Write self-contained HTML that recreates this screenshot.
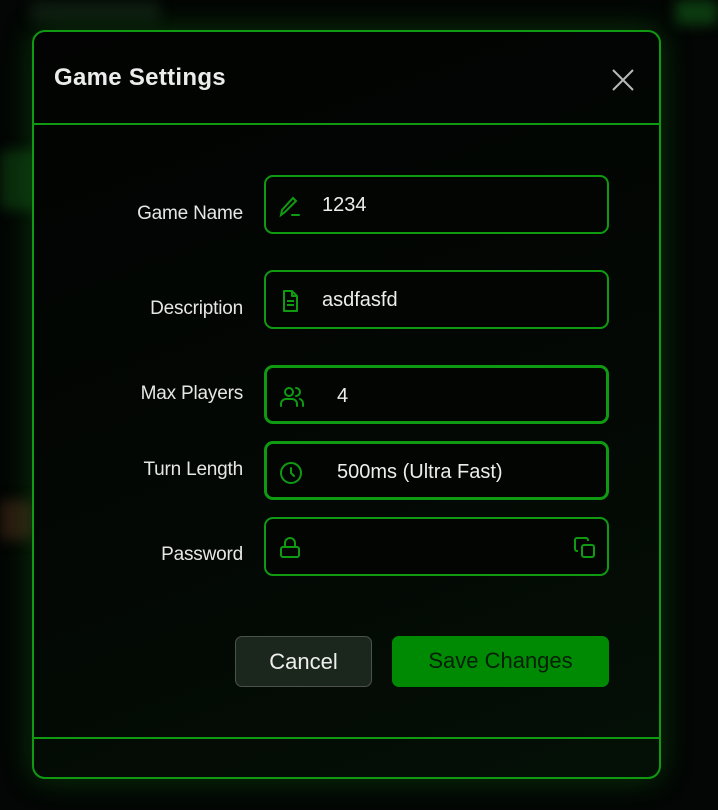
<!DOCTYPE html>
<html><head><style>
*{box-sizing:border-box;margin:0;padding:0}
body{width:718px;height:810px;background:#030604;font-family:"Liberation Sans",sans-serif;position:relative;overflow:hidden}
.bgblur{position:absolute;border-radius:6px;filter:blur(6px)}
.modal{position:absolute;left:32px;top:30px;width:629px;height:749px;border:2px solid #0f9a12;border-radius:13px;background:linear-gradient(160deg,#020302 0%,#030804 60%,#041006 100%);box-shadow:0 0 30px rgba(20,140,20,.35)}
.hdr{position:absolute;left:0;right:0;top:0;height:93px;border-bottom:2px solid #0f9a12}
.hdr h2{position:absolute;left:20px;top:32px;font-size:24px;font-weight:bold;color:#ececec;letter-spacing:0.3px}
.close{position:absolute;left:577px;top:36px}
.ftr{position:absolute;left:0;right:0;top:705px;border-top:2px solid #0f9a12}
.lbl{position:absolute;right:416px;font-size:19px;color:#e6e6e6;text-align:right;white-space:nowrap;letter-spacing:-0.2px}
.inp{position:absolute;left:230px;width:345px;height:59px;border:2px solid #0f9a12;border-radius:9px;background:#020502}
.inp.thick{border-width:3px}
.inp svg{position:absolute;left:12px;top:17px}
.inp span{position:absolute;top:17px;font-size:20px;color:#ededed}
.btn{position:absolute;top:604px;height:51px;border-radius:7px;font-size:22px;text-align:center;line-height:49px}
</style></head><body>
<div class="bgblur" style="left:30px;top:0;width:130px;height:22px;background:#0e1a10"></div>
<div class="bgblur" style="left:675px;top:0;width:43px;height:25px;background:#0c3a10"></div>
<div class="bgblur" style="left:0;top:150px;width:40px;height:60px;background:#0a2a0c"></div>
<div class="bgblur" style="left:0;top:500px;width:35px;height:40px;background:#2a1a10"></div>
<div class="modal">
 <div class="hdr"><h2>Game Settings</h2>
  <svg class="close" width="24" height="24" viewBox="0 0 24 24"><path d="M2 2L22 22M22 2L2 22" stroke="#b8b8b8" stroke-width="2"/></svg></div>
 <div class="lbl" style="top:171px">Game Name</div>
 <div class="inp" style="top:143px"><svg width="24" height="24" viewBox="0 0 24 24" fill="none" stroke="#0f9a12" stroke-width="2" stroke-linecap="round"><path d="M3 21l1-5L15 4l3 3L7 18zM14 21h7"/></svg><span style="left:56px">1234</span></div>
 <div class="lbl" style="top:266px">Description</div>
 <div class="inp" style="top:238px"><svg width="24" height="24" viewBox="0 0 24 24" fill="none" stroke="#0f9a12" stroke-width="2" stroke-linejoin="round"><path d="M6 2h8l5 5v15H6zM14 2v5h5M9 12h7M9 16h7"/></svg><span style="left:56px">asdfasfd</span></div>
 <div class="lbl" style="top:351px">Max Players</div>
 <div class="inp thick" style="top:333px"><svg width="26" height="24" viewBox="0 0 26 24" fill="none" stroke="#0f9a12" stroke-width="2" stroke-linecap="round"><circle cx="10" cy="7" r="4"/><path d="M2 21v-2a5 5 0 015-5h6a5 5 0 015 5v2M17 3a4 4 0 010 8M21 14a5 5 0 013 5v2"/></svg><span style="left:70px">4</span></div>
 <div class="lbl" style="top:427px">Turn Length</div>
 <div class="inp thick" style="top:409px"><svg width="24" height="24" viewBox="0 0 24 24" fill="none" stroke="#0f9a12" stroke-width="2" stroke-linecap="round"><circle cx="12" cy="12" r="10"/><path d="M12 7v5l3 3"/></svg><span style="left:70px">500ms (Ultra Fast)</span></div>
 <div class="lbl" style="top:512px">Password</div>
 <div class="inp" style="top:485px"><svg width="24" height="24" viewBox="0 0 24 24" fill="none" stroke="#0f9a12" stroke-width="2"><rect x="3" y="11" width="18" height="10" rx="2"/><path d="M7 11V7a5 5 0 0110 0v4"/></svg>
  <svg style="left:auto;right:10px" width="24" height="24" viewBox="0 0 24 24" fill="none" stroke="#0f9a12" stroke-width="2"><rect x="9" y="9" width="12" height="12" rx="2"/><path d="M5 15H4a2 2 0 01-2-2V4a2 2 0 012-2h9a2 2 0 012 2v1"/></svg></div>
 <div class="btn" style="left:201px;width:137px;background:#1b261d;border:1px solid #4a524b;color:#eee">Cancel</div>
 <div class="btn" style="left:358px;width:217px;background:#008a04;color:#062006">Save Changes</div>
 <div class="ftr"></div>
</div>
</body></html>
